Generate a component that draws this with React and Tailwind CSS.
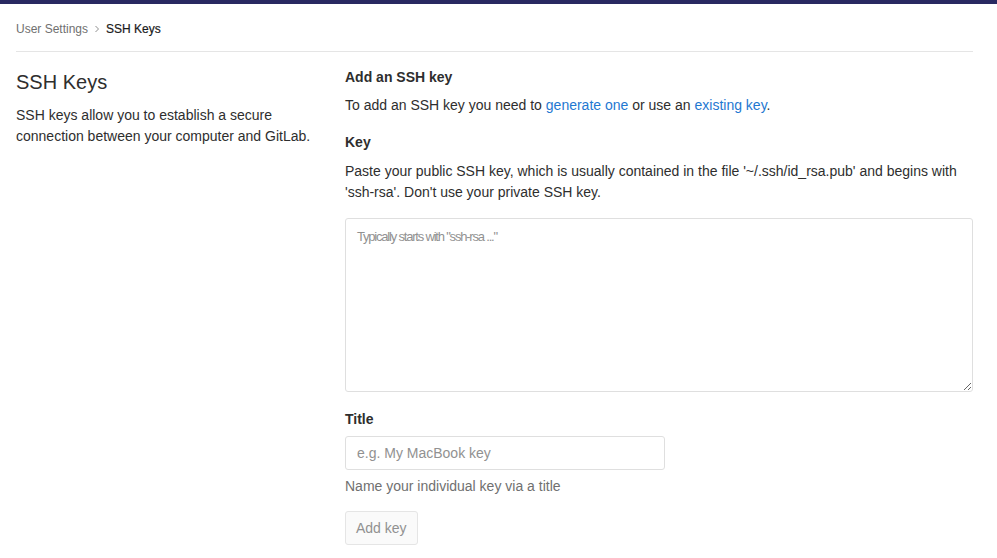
import React from "react";

export default function App() {
  const font = { fontFamily: '"Segoe UI", "Liberation Sans", Arial, sans-serif' };
  return (
    <div className="min-h-[558px] bg-white text-[#2e2e2e] text-[14px]" style={font}>
      <div className="h-[4px] bg-[#292961]" />
      <div className="pl-[16px] pr-[24px]">
        <div className="h-[48px] flex items-center border-b border-[#e5e5e5] text-[12px] pt-[2px]">
          <span className="text-[#707070]">User Settings</span>
          <svg className="mx-[6px] text-[#909090]" width="6" height="8" viewBox="0 0 6 8" fill="none">
            <path d="M1.5 1l3 3-3 3" stroke="currentColor" strokeWidth="1" />
          </svg>
          <span className="text-[#1a1a1a] [-webkit-text-stroke:0.2px_#1a1a1a]">SSH Keys</span>
        </div>
        <div className="flex pt-[15px]">
          <div className="w-[329px] shrink-0 pr-[20px]">
            <h4 className="text-[20px] leading-[28px] mt-[1px] mb-[9px] text-[#2e2e2e]">SSH Keys</h4>
            <p className="leading-[21px]">
              SSH keys allow you to establish a secure connection between your computer and GitLab.
            </p>
          </div>
          <div className="flex-1">
            <h5 className="text-[14px] font-bold leading-[20px] mb-[8px]">Add an SSH key</h5>
            <p className="leading-[20px] mb-[17px]">
              To add an SSH key you need to <a className="text-[#1f78d1]">generate one</a> or use an{" "}
              <a className="text-[#1f78d1]">existing key</a>.
            </p>
            <label className="block font-bold leading-[20px] mb-[9px]">Key</label>
            <p className="leading-[21px] mb-[15px]">
              Paste your public SSH key, which is usually contained in the file '~/.ssh/id_rsa.pub' and begins with 'ssh-rsa'. Don't use your private SSH key.
            </p>
            <textarea
              className="block w-full h-[174px] border border-[#dfdfdf] rounded-[3px] px-[11px] py-[8px] leading-[20px] text-[13px] tracking-[-1.2px] placeholder:text-[#919191] outline-none resize-y"
              placeholder={'Typically starts with "ssh-rsa ..."'}
            />
            <label className="block font-bold leading-[20px] mt-[17px] mb-[7px]">Title</label>
            <input
              className="block w-[320px] h-[34px] border border-[#dfdfdf] rounded-[3px] px-[11px] text-[14px] placeholder:text-[#919191] outline-none"
              placeholder="e.g. My MacBook key"
            />
            <p className="text-[#707070] leading-[20px] mt-[6px]">Name your individual key via a title</p>
            <button className="mt-[15px] h-[34px] px-[10px] border border-[#e5e5e5] rounded-[3px] bg-[#fafafa] text-[#919191] text-[14px]">
              Add key
            </button>
          </div>
        </div>
      </div>
    </div>
  );
}
